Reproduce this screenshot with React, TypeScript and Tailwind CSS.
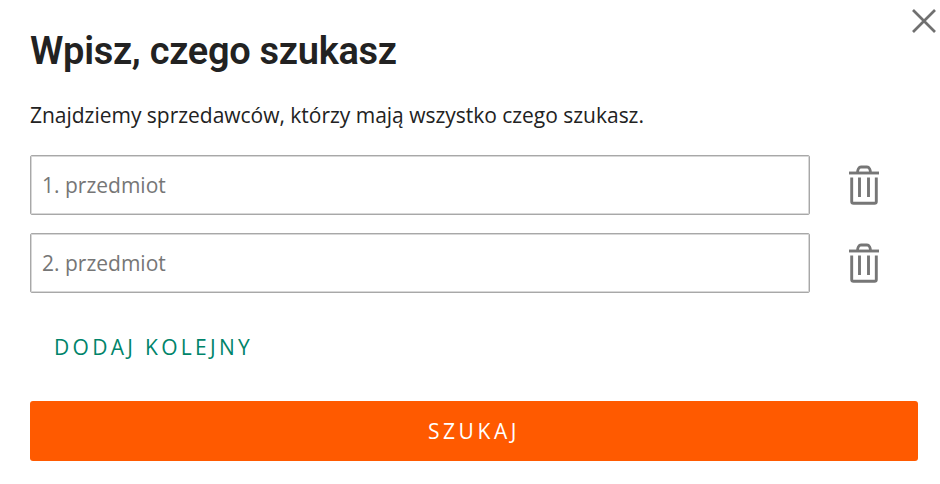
import React, { memo } from "react";

const items = [
  { id: 1, placeholder: "1. przedmiot" },
  { id: 2, placeholder: "2. przedmiot" },
];

const CloseIcon = () => (
  <svg width="24" height="24" viewBox="0 0 24 24" fill="none" stroke="#707070" strokeWidth="2.7">
    <path d="M1 1L23 23M23 1L1 23" />
  </svg>
);

const TrashIcon = () => (
  <svg width="30" height="40" viewBox="0 0 30 40" fill="none" stroke="#767676" strokeWidth="2.9">
    <path d="M0 8H30" />
    <path d="M8.500 8C8.500 4.500 10 2 12 2H18C20 2 21.500 4.500 21.500 8" />
    <path d="M2.700 12.500V36.500Q2.700 38.300 4.500 38.300H25.500Q27.300 38.300 27.300 36.500V12.500" />
    <path d="M10.500 12.500V32M19.500 12.500V32" />
  </svg>
);

const ItemRow = memo(({ placeholder }: { placeholder: string }) => (
  <div className="flex items-center">
    <input
      type="text"
      placeholder={placeholder}
      className="h-[60px] w-[780px] rounded-xs border border-[#a8a8a8] px-[11px] text-[21px] text-[#222] shadow-[inset_0_0_0_1px_#d8d8d8] placeholder:text-[#767676]"
    />
    <button type="button" aria-label="Usuń" className="ml-[39px]">
      <TrashIcon />
    </button>
  </div>
));
ItemRow.displayName = "ItemRow";

function App() {
  return (
    <div className="relative h-[484px] w-[940px] bg-white pt-[30px] pr-[22px] pl-[30px] font-['Open_Sans',sans-serif] text-[#222]">
      <button type="button" aria-label="Zamknij" className="absolute top-[9px] left-[912px]">
        <CloseIcon />
      </button>
      <h1 className="font-['Roboto',sans-serif] text-[38px] leading-[42px] font-semibold tracking-[-0.3px] whitespace-nowrap">
        Wpisz, czego szukasz
      </h1>
      <p className="mt-[27px] text-[21px] leading-[32px] tracking-[-0.02px] whitespace-nowrap">
        Znajdziemy sprzedawców, którzy mają wszystko czego szukasz.
      </p>
      <div className="mt-[24px] flex flex-col gap-[18px]">
        {items.map((item) => (
          <ItemRow key={item.id} placeholder={item.placeholder} />
        ))}
      </div>
      <button
        type="button"
        className="mt-[24px] block h-[60px] pt-[2px] pl-[24px] text-[21px] tracking-[3.3px] text-[#00846a]"
      >
        DODAJ KOLEJNY
      </button>
      <button
        type="button"
        className="mt-[24px] block h-[60px] w-full rounded-[3px] bg-[#ff5a00] pt-[1px] text-[21px] tracking-[3.6px] text-white"
      >
        SZUKAJ
      </button>
    </div>
  );
}

export default App;
